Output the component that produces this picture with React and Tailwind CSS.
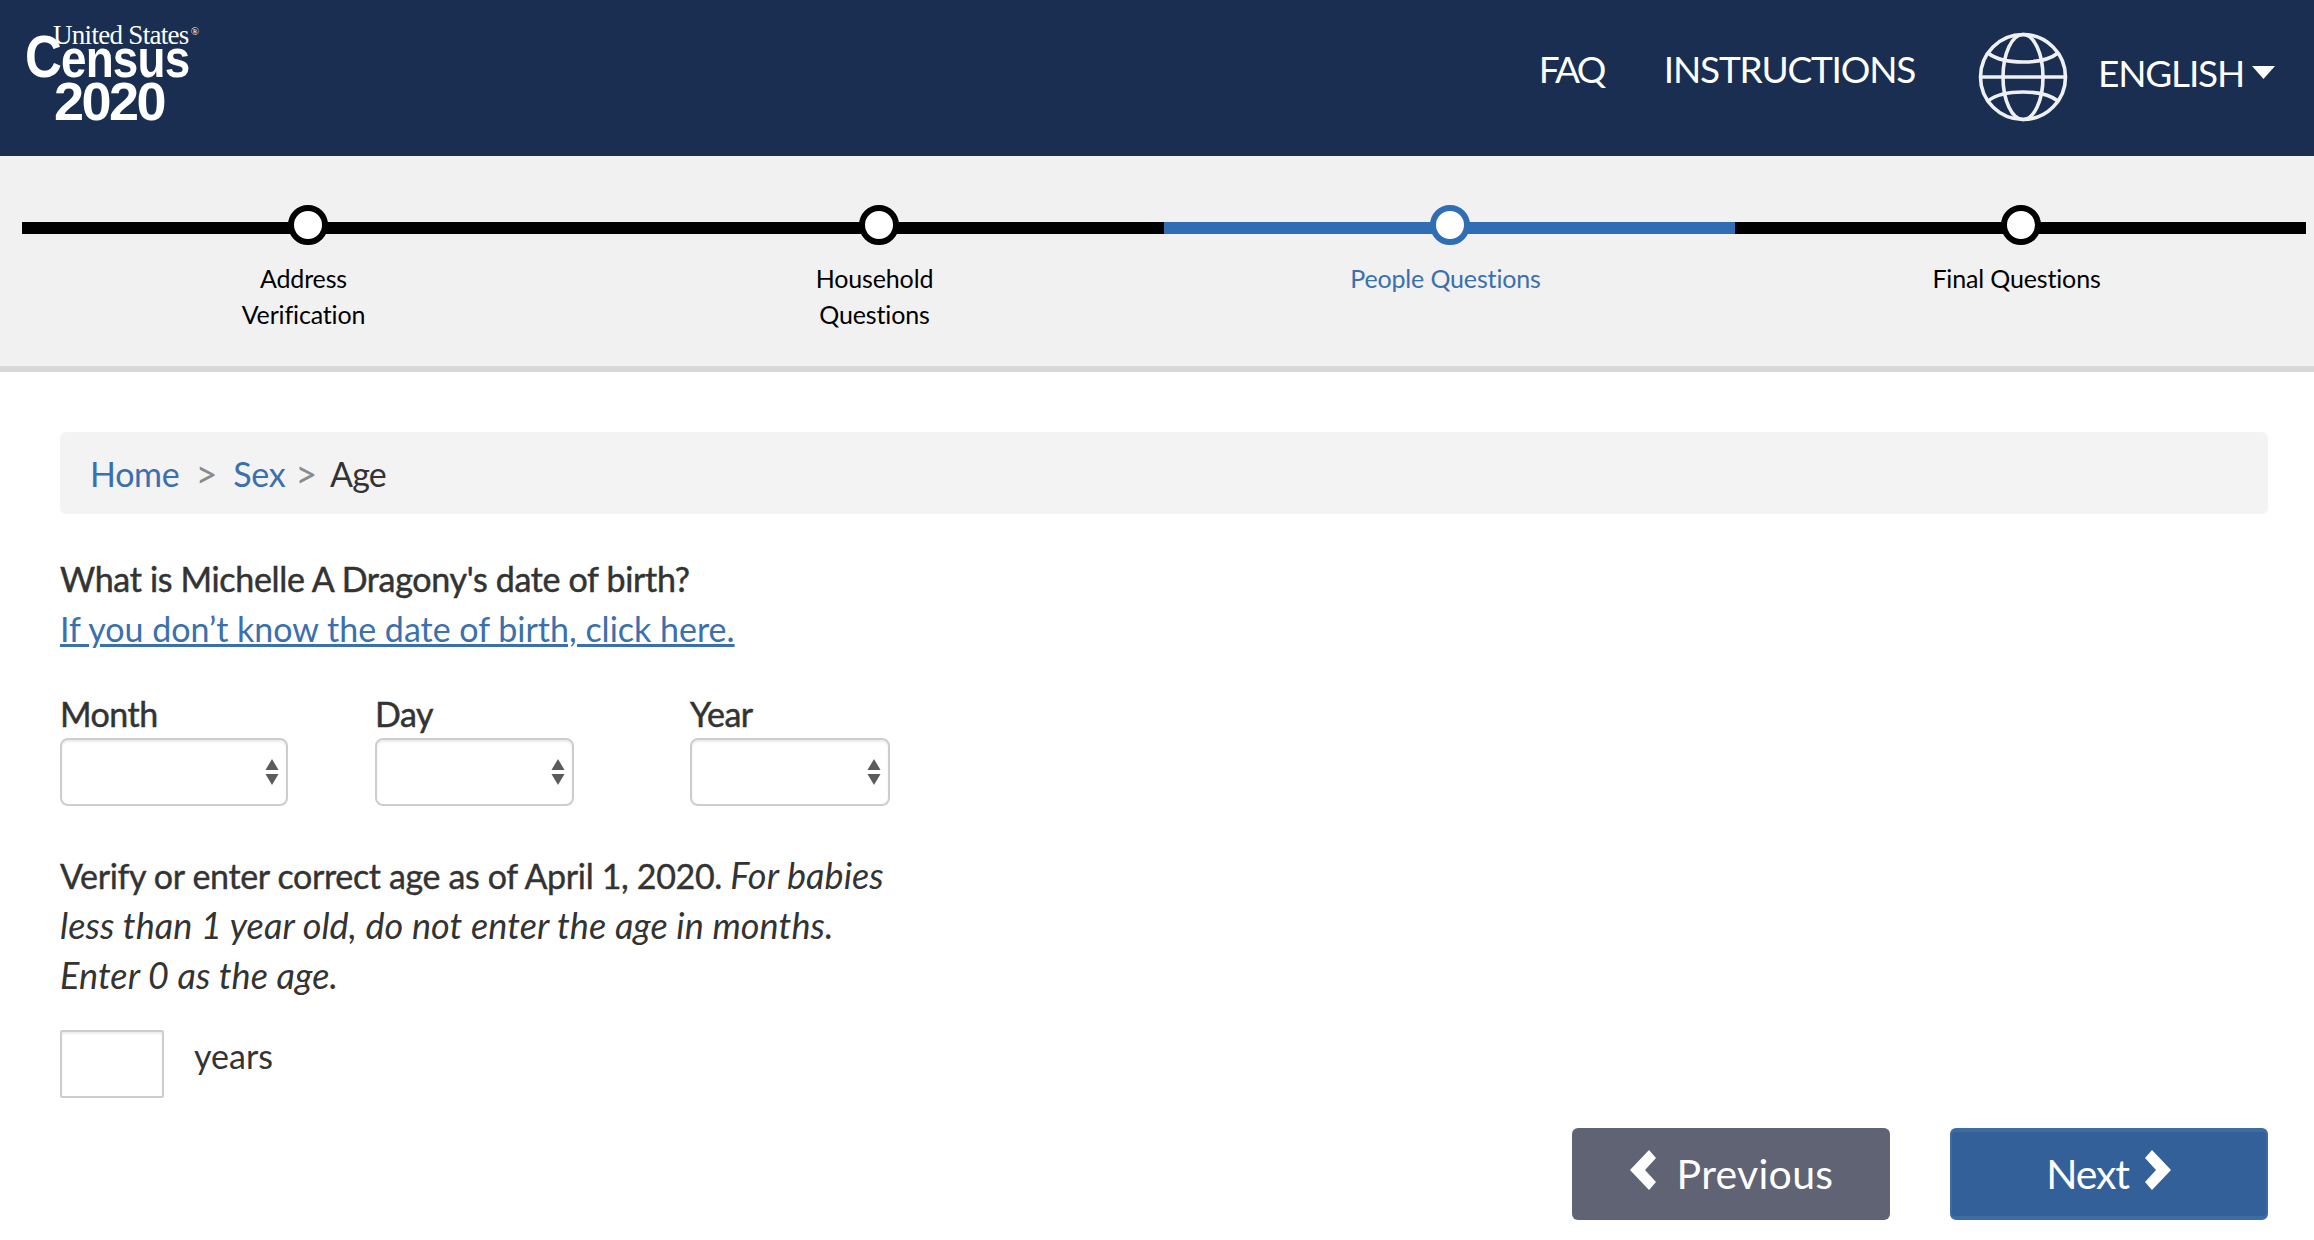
const font = { fontFamily: '"Lato", "Noto Sans", sans-serif' };

function Globe() {
  return (
    <svg width="90" height="90" viewBox="0 0 90 90" fill="none" stroke="#eef0f3" strokeWidth="3.6">
      <circle cx="45" cy="45" r="42.5" />
      <ellipse cx="45" cy="45" rx="20" ry="42.5" />
      <path d="M2.5 45H87.5" />
      <path d="M10 21C25 33 65 33 80 21" />
      <path d="M10 69C25 57 65 57 80 69" />
    </svg>
  );
}

function Step({ label, second, active }) {
  return (
    <div className="relative flex flex-col items-center">
      <div className={active ? "mt-[66px] h-3 w-full bg-[#2f6db5]" : "mt-[66px] h-3 w-full bg-black"} />
      <div
        className={
          active
            ? "absolute left-1/2 top-[49px] h-10 w-10 -translate-x-1/2 rounded-full border-[6px] border-[#2f6db5] bg-white"
            : "absolute left-1/2 top-[49px] h-10 w-10 -translate-x-1/2 rounded-full border-[6px] border-black bg-white"
        }
      />
      <div
        className={
          (active ? "text-[#3a70ad] " : "text-black ") +
          "mt-[26px] pr-2 text-center text-[25px] leading-[36px] tracking-[-0.15px]"
        }
      >
        <div>{label}</div>
        {second && <div>{second}</div>}
      </div>
    </div>
  );
}

function Chevron({ dir }) {
  return (
    <svg className="mt-[-8px]" width="28" height="40" viewBox="0 0 28 40" fill="white">
      {dir === "left" ? (
        <path d="M20 0L27 8L16 20L27 32L20 40L1 20Z" />
      ) : (
        <path d="M8 0L1 8L12 20L1 32L8 40L27 20Z" />
      )}
    </svg>
  );
}

function DateSelect({ label, boxClass }) {
  return (
    <div className={boxClass}>
      <div className="text-[34px] leading-[36px] tracking-[-0.5px] text-[#333] [-webkit-text-stroke:0.5px_#333]">{label}</div>
      <div className="relative mt-[6px] h-[68px] w-full">
        <select
          className="h-full w-full appearance-none rounded-[8px] border-2 border-[#cdcdcd] bg-white shadow-[inset_0_2px_2px_rgba(0,0,0,0.075)]"
          aria-label={label}
        />
        <svg className="absolute right-[9px] top-[20px]" width="14" height="28" viewBox="0 0 14 28" fill="#5b5b5b">
          <path d="M7 1L13.5 12H0.5Z" />
          <path d="M7 27L13.5 16H0.5Z" />
        </svg>
      </div>
    </div>
  );
}

export default function App() {
  return (
    <div className="min-h-[1240px] w-full overflow-hidden bg-white text-[#333]" style={font}>
      <header className="flex h-[156px] items-start justify-between bg-[#192e50] text-white">
        <div className="ml-[25px] mt-[24px] flex w-[180px] flex-col">
          <div
            className="h-[22px] pl-[28px] text-[27px] leading-[22px] tracking-[-0.7px] whitespace-nowrap"
            style={{ fontFamily: '"Liberation Serif", serif' }}
          >
            United States<span className="relative top-[-9px] ml-[2px] text-[11px]">®</span>
          </div>
          <div
            className="mt-[-5px] h-[32px] origin-left scale-x-[0.85] whitespace-nowrap text-[54px] font-bold leading-[32px] tracking-[-1px]"
            style={{ fontFamily: '"Liberation Sans", sans-serif' }}
          >
            <span className="text-[60px]">C</span>ensus
          </div>
          <div
            className="mt-[9px] h-[38px] pl-[29px] text-[54px] font-bold leading-[38px] tracking-[-2.5px]"
            style={{ fontFamily: '"Liberation Sans", sans-serif' }}
          >
            2020
          </div>
        </div>
        <div className="flex items-start pr-[39px]">
          <a className="mt-[46px] text-[37px] leading-[46px] tracking-[-2.6px]">FAQ</a>
          <a className="ml-[60px] mt-[46px] text-[37px] leading-[46px] tracking-[-1.2px]">INSTRUCTIONS</a>
          <div className="ml-[63px] mt-[32px]">
            <Globe />
          </div>
          <a className="ml-[30px] mt-[50px] text-[37px] leading-[46px] tracking-[-1.2px]">ENGLISH</a>
          <svg className="ml-[8px] mt-[66px]" width="23" height="13" viewBox="0 0 23 13" fill="white">
            <path d="M0 0H23L11.5 13Z" />
          </svg>
        </div>
      </header>

      <nav className="h-[216px] border-b-[6px] border-[#d6d7d9] bg-[#f1f1f1] pl-[22px] pr-[8px]">
        <div className="grid grid-cols-4">
          <Step label="Address" second="Verification" />
          <Step label="Household" second="Questions" />
          <Step label="People Questions" active />
          <Step label="Final Questions" />
        </div>
      </nav>

      <main className="pl-[60px] pr-[46px]">
        <div className="mt-[60px] flex h-[82px] items-center rounded-[6px] bg-[#f3f3f3] px-[30px] text-[34px] tracking-[-0.3px]">
          <a className="text-[#3a70ad]">Home</a>
          <span className="ml-[16px] text-[38px] leading-none text-[#8a8a8a]">&gt;</span>
          <a className="ml-[16px] text-[#3a70ad]">Sex</a>
          <span className="ml-[10px] text-[38px] leading-none text-[#8a8a8a]">&gt;</span>
          <span className="ml-[13px] tracking-[-0.8px]">Age</span>
        </div>

        <div className="mt-[40px] text-[34px] leading-[50px] tracking-[-0.33px] text-[#333] [-webkit-text-stroke:0.5px_#333]">
          What is Michelle A Dragony's date of birth?
        </div>
        <a className="block text-[34px] leading-[50px] text-[#3a70ad] underline">
          If you don’t know the date of birth, click here.
        </a>

        <div className="mt-[42px] flex">
          <DateSelect label="Month" boxClass="w-[228px]" />
          <DateSelect label="Day" boxClass="ml-[87px] w-[199px]" />
          <DateSelect label="Year" boxClass="ml-[116px] w-[200px]" />
        </div>

        <div className="mt-[45px] w-[850px] text-[34px] leading-[50px] tracking-[-0.35px]">
          <span className="[-webkit-text-stroke:0.4px_#333]">Verify or enter correct age as of April 1, 2020.</span>{" "}
          <em className="text-[36px] leading-[40px] tracking-[0.1px]">For babies less than 1 year old, do not enter the age in months. Enter 0 as the age.</em>
        </div>

        <div className="mt-[29px] flex items-start">
          <input
            className="h-[68px] w-[104px] rounded-[2px] border-2 border-[#cdcdcd] bg-white shadow-[inset_0_2px_2px_rgba(0,0,0,0.075)]"
            aria-label="years"
          />
          <span className="ml-[30px] mt-[1px] text-[34px] leading-[50px]">years</span>
        </div>

        <div className="mt-[30px] flex justify-end gap-[60px]">
          <button className="flex h-[92px] w-[318px] items-center justify-center gap-[20px] rounded-[6px] bg-[#5f6374] text-[41px] tracking-[0.3px] text-white">
            <Chevron dir="left" />
            Previous
          </button>
          <button className="flex h-[92px] w-[318px] items-center justify-center gap-[15px] rounded-[6px] border-y-4 border-x-2 border-[#3d6ca3] bg-[#346099] text-[41px] tracking-[-1.2px] text-white">
            Next
            <Chevron dir="right" />
          </button>
        </div>
      </main>
    </div>
  );
}
